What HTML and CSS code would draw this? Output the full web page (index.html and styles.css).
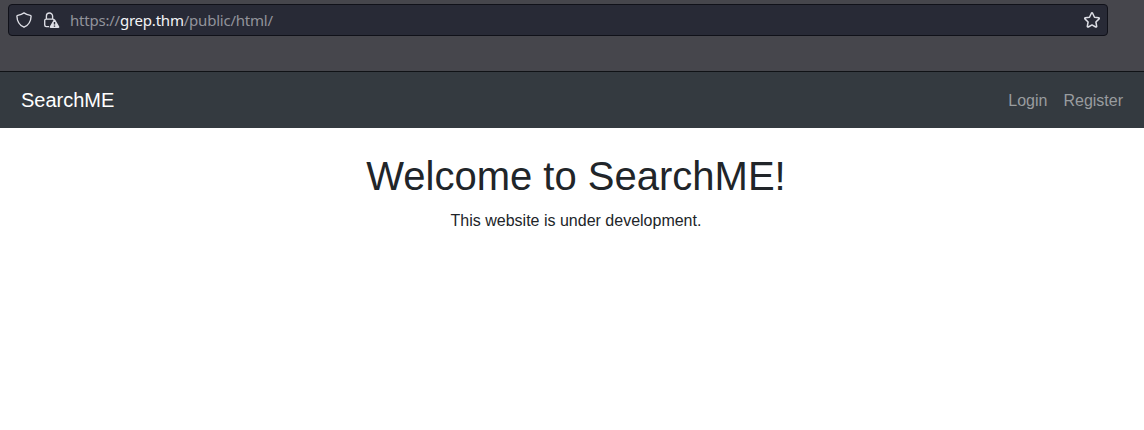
FILE: index.html
```html
<!DOCTYPE html>
<html lang="en">
<head>
<meta charset="utf-8">
<title>SearchME</title>
<link rel="stylesheet" href="styles.css">
</head>
<body>
<div class="toolbar">
  <div class="urlbar">
    <svg class="icon shield" width="16" height="16" viewBox="0 0 16 16" fill="none" stroke="currentColor" stroke-width="1.35" stroke-linejoin="round"><path d="M8 .9c1.7 1.3 3.7 2 6.3 2.4.7.1.8.4.8.9-.2 5.2-2.2 8.900-7.100 11C3.100 13.100 1.100 9.400.9 4.200c0-.5.1-.8.8-.9C4.300 2.900 6.300 2.200 8 .9z"/></svg>
    <svg class="icon lock" width="17" height="16" viewBox="0 0 17 16"><path d="M6 14.600H3.200a1.500 1.500 0 0 1-1.500-1.500V8.600a1.500 1.500 0 0 1 1.500-1.500h6.600a1.500 1.500 0 0 1 1.300.9M3.400 7V4.100a3.100 3.100 0 0 1 6.200 0V7" fill="none" stroke="currentColor" stroke-width="1.350"/><path d="M11.500 7.300c.4 0 .7.200.9.600l3.800 6.500c.4.700 0 1.500-.8 1.500H7.600c-.8 0-1.200-.8-.8-1.500l3.800-6.500c.2-.4.500-.6.9-.6z" fill="currentColor"/><path d="M11.500 9.900v2.700M11.500 13.500v1.300" stroke="#282a36" stroke-width="1.400"/></svg>
    <div class="url">https://<span class="host">grep.thm</span>/public/html/</div>
    <svg class="icon star" width="16" height="16" viewBox="0 0 16 16" fill="none" stroke="currentColor" stroke-width="1.500" stroke-linejoin="round"><path d="M7.400 1.200a.7.7 0 0 1 1.200 0l1.900 4 4.200.6c.6.100.8.700.4 1.100l-3.200 3.100.8 4.300c.1.600-.4 1-1 .7L8 12.900l-3.700 2.100c-.6.300-1.100-.1-1-.7l.8-4.300L.9 6.900c-.4-.4-.2-1 .4-1.100l4.200-.6z"/></svg>
  </div>
</div>
<nav class="navbar">
  <a class="brand">SearchME</a>
  <div class="links"><a>Login</a><a>Register</a></div>
</nav>
<main class="content">
  <h1>Welcome to SearchME!</h1>
  <p>This website is under development.</p>
</main>
</body>
</html>
```
FILE: styles.css
```css
* { box-sizing: border-box; }
body {
  margin: 0;
  min-height: 430px;
  background: #fff;
  color: #212529;
  font: 16px/24px "Liberation Sans", Arial, sans-serif;
}
.toolbar {
  height: 72px;
  padding: 4px 36px 0 8px;
  background: #46464c;
  border-bottom: 1px solid #101216;
}
.urlbar {
  display: flex;
  align-items: center;
  height: 32px;
  padding: 0 7px;
  background: #282a36;
  border: 1px solid #101119;
  border-radius: 4px;
}
.icon { flex: none; color: #dedfe6; }
.lock { margin-left: 11px; }
.url {
  flex: 1;
  margin-left: 10px;
  color: #92939b;
  font: 15px/20px "Noto Sans", sans-serif;
  letter-spacing: -0.22px;
  white-space: nowrap;
}
.host { color: #f4f4f6; }
.navbar {
  display: flex;
  align-items: center;
  justify-content: space-between;
  height: 56px;
  padding: 0 21px;
  background: #343a40;
}
.brand { color: #fff; font-size: 20px; line-height: 30px; }
.links { display: flex; gap: 16px; padding-top: 2px; color: #999c9f; }
.content { padding: 24px 0 0 8px; text-align: center; }
h1 { margin: 0 0 9px; font-size: 40px; font-weight: 400; line-height: 48px; }
p { margin: 0; }
```
